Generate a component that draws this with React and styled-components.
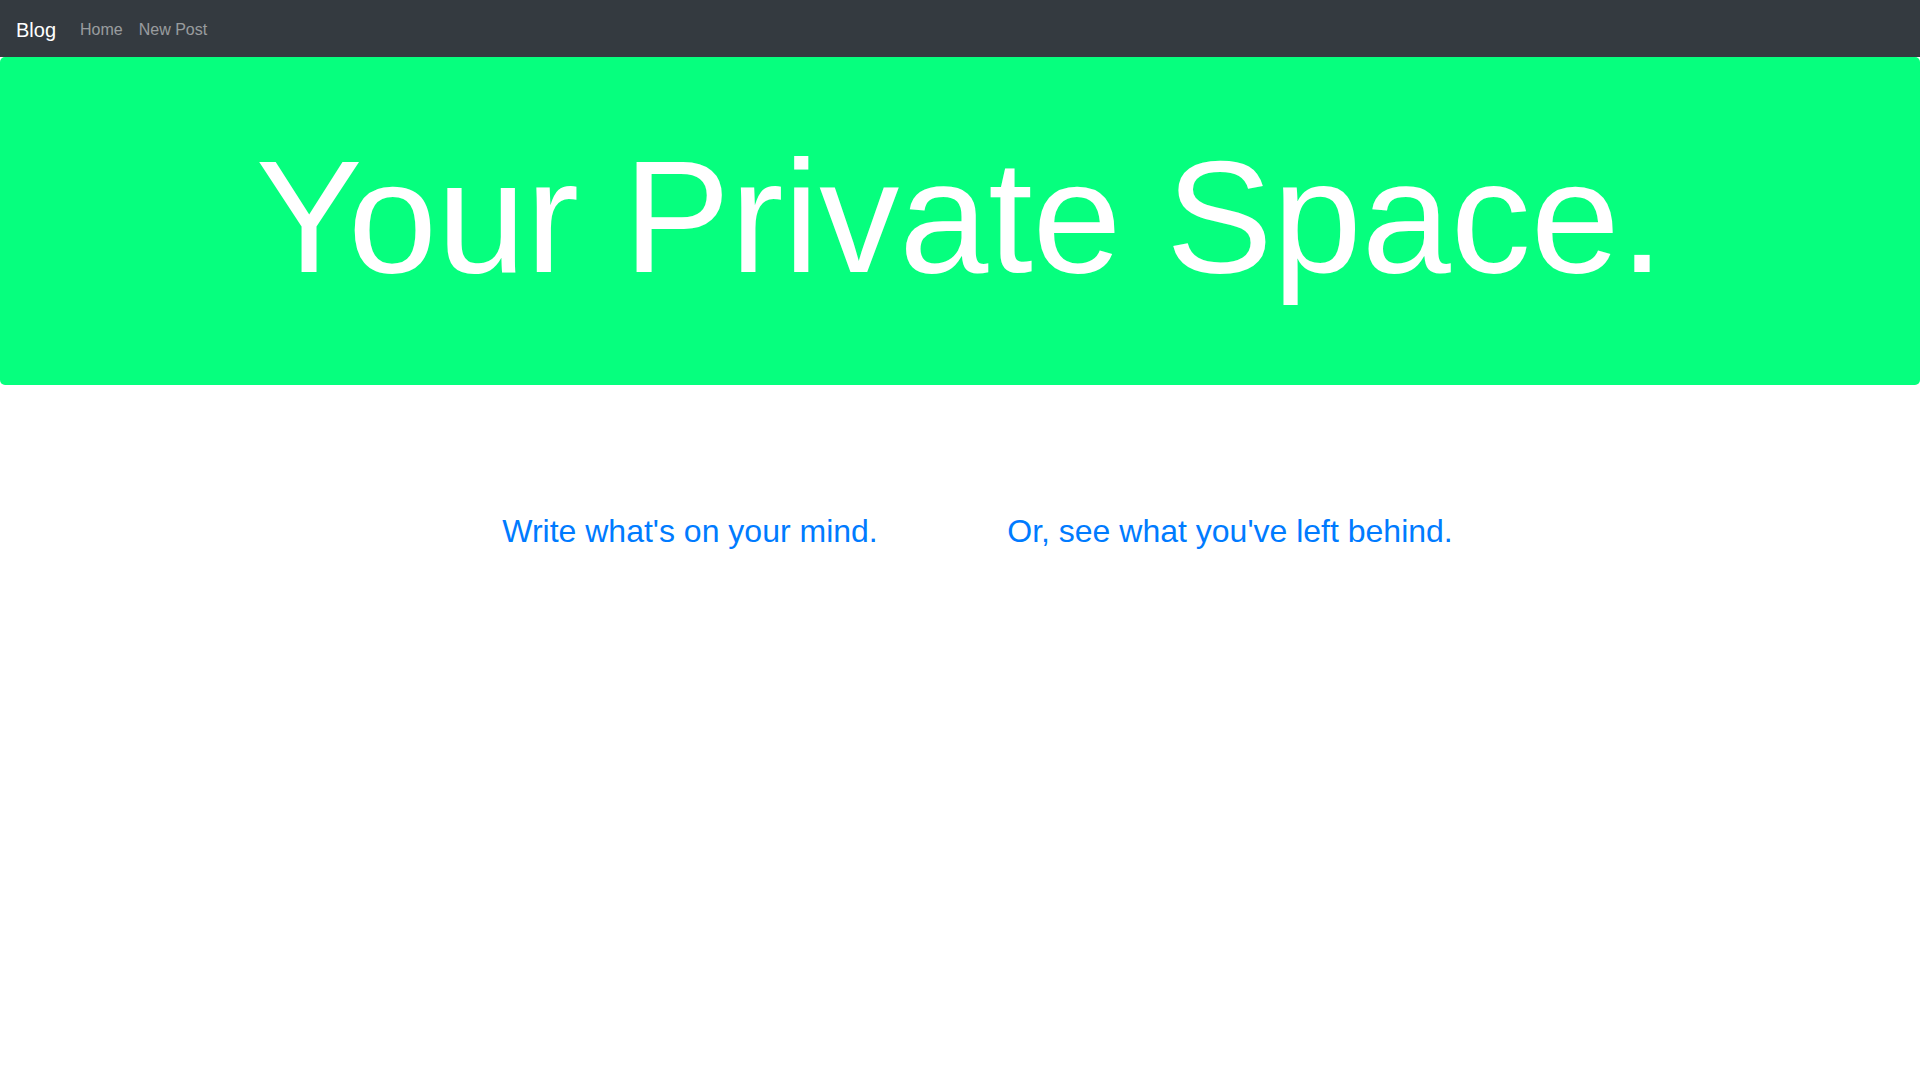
import React from 'react'
import styled, { createGlobalStyle } from 'styled-components'

const GlobalStyle = createGlobalStyle`
  body {
    margin: 0;
    font-family: "Liberation Sans", Arial, sans-serif;
    background: #fff;
    color: #212529;
  }
`

export default function App() {
  return (
    <>
      <GlobalStyle />
      <NavBar>
        <Brand href="#">Blog</Brand>
        <NavLinks>
          <NavLink href="#">Home</NavLink>
          <NavLink href="#">New Post</NavLink>
        </NavLinks>
      </NavBar>
      <Hero>
        <HeroTitle>Your Private Space.</HeroTitle>
      </Hero>
      <LinksRow>
        <LinkCol>
          <BigLink href="#">Write what's on your mind.</BigLink>
        </LinkCol>
        <LinkCol>
          <BigLink href="#">Or, see what you've left behind.</BigLink>
        </LinkCol>
      </LinksRow>
    </>
  )
}

const NavBar = styled.nav`
  display: flex;
  align-items: center;
  height: 57px;
  box-sizing: border-box;
  padding: 2px 16px 0;
  background: #343a40;
`
const Brand = styled.a`
  color: #fff;
  font-size: 20px;
  line-height: 30px;
  margin-right: 16px;
  text-decoration: none;
`
const NavLinks = styled.div`
  display: flex;
`
const NavLink = styled.a`
  color: rgba(255, 255, 255, 0.5);
  font-size: 16px;
  line-height: 24px;
  padding: 8px;
  text-decoration: none;
`
const Hero = styled.header`
  background: #06ff7e;
  border-radius: 5px;
  padding: 64px 32px;
  height: 328px;
  box-sizing: border-box;
  margin-bottom: 32px;
`
const HeroTitle = styled.h1`
  margin: 0;
  color: #fff;
  font-size: 160px;
  font-weight: 400;
  line-height: 1.2;
  text-align: center;
`
const LinksRow = styled.section`
  display: flex;
  width: 1080px;
  margin: 0 auto;
  padding-top: 95px;
`
const LinkCol = styled.div`
  flex: 1;
  text-align: center;
`
const BigLink = styled.a`
  color: #007bff;
  font-size: 32px;
  line-height: 1.2;
  text-decoration: none;
`
